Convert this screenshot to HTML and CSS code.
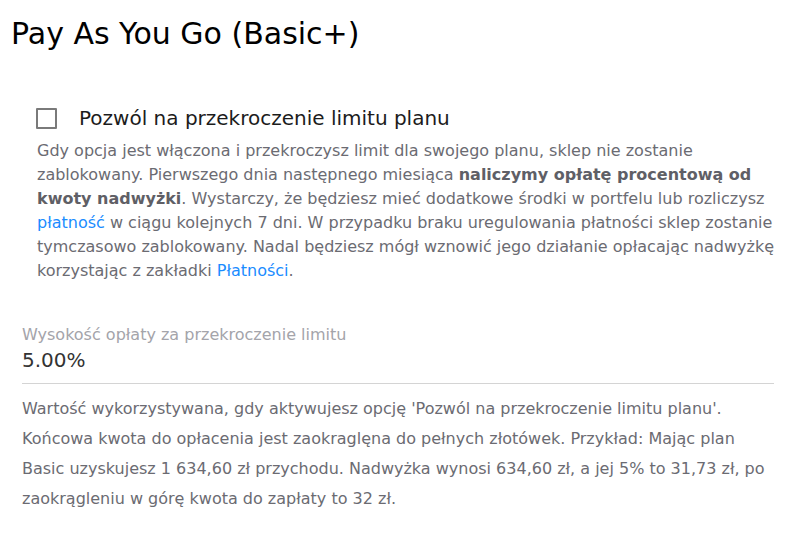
FILE: index.html
```html
<!DOCTYPE html>
<html lang="pl">
<head>
<meta charset="utf-8">
<link rel="stylesheet" href="styles.css">
</head>
<body>
<div class="page">
  <h1 class="title">Pay As You Go (Basic+)</h1>
  <div class="option">
    <label class="check-row">
      <span class="checkbox"></span>
      <span class="check-label">Pozwól na przekroczenie limitu planu</span>
    </label>
    <p class="desc">Gdy opcja jest włączona i przekroczysz limit dla swojego planu, sklep nie zostanie zablokowany. Pierwszego dnia następnego miesiąca <b>naliczymy opłatę procentową od kwoty nadwyżki</b>. Wystarczy, że będziesz mieć dodatkowe środki w portfelu lub rozliczysz <a class="link">płatność</a> w ciągu kolejnych 7 dni. W przypadku braku uregulowania płatności sklep zostanie tymczasowo zablokowany. Nadal będziesz mógł wznowić jego działanie opłacając nadwyżkę korzystając z zakładki <a class="link">Płatności</a>.</p>
  </div>
  <div class="field">
    <div class="field-label">Wysokość opłaty za przekroczenie limitu</div>
    <div class="field-value">5.00%</div>
  </div>
  <p class="help">Wartość wykorzystywana, gdy aktywujesz opcję 'Pozwól na przekroczenie limitu planu'. Końcowa kwota do opłacenia jest zaokraglęna do pełnych złotówek. Przykład: Mając plan Basic uzyskujesz 1 634,60 zł przychodu. Nadwyżka wynosi 634,60 zł, a jej 5% to 31,73 zł, po zaokrągleniu w górę kwota do zapłaty to 32 zł.</p>
</div>
</body>
</html>
```
FILE: styles.css
```css
html, body {
  margin: 0;
  padding: 0;
  background: #ffffff;
}
body {
  font-family: "DejaVu Sans", Verdana, sans-serif;
}
.page {
  width: 806px;
  box-sizing: border-box;
  padding: 0 32px 0 0;
}
.title {
  margin: 0;
  padding: 16px 0 0 11px;
  font-size: 30px;
  font-weight: normal;
  color: #000;
  line-height: 36px;
}
.option {
  padding: 54px 0 0 36px;
}
.check-row {
  display: flex;
  align-items: center;
  gap: 22px;
}
.checkbox {
  width: 17px;
  height: 17px;
  border: 2px solid #7a7a7a;
  border-radius: 1px;
  flex: none;
}
.check-label {
  font-size: 20px;
  color: #1c1c1c;
  line-height: 24px;
}
.desc {
  margin: 9px 0 0 1px;
  font-size: 16px;
  line-height: 24px;
  color: #6b6b72;
}
.desc b {
  font-weight: bold;
  color: #5f5f66;
}
.link {
  color: #1a8cff;
  text-decoration: none;
}
.field {
  margin: 41px 0 0 22px;
  border-bottom: 1px solid #d4d4d4;
  padding-bottom: 9px;
}
.field-label {
  font-size: 16px;
  color: #a4a4aa;
  line-height: 22px;
}
.field-value {
  font-size: 20px;
  color: #333;
  line-height: 28px;
}
.help {
  margin: 10px 0 0 22px;
  font-size: 16px;
  line-height: 30px;
  color: #6b6b72;
}
```
